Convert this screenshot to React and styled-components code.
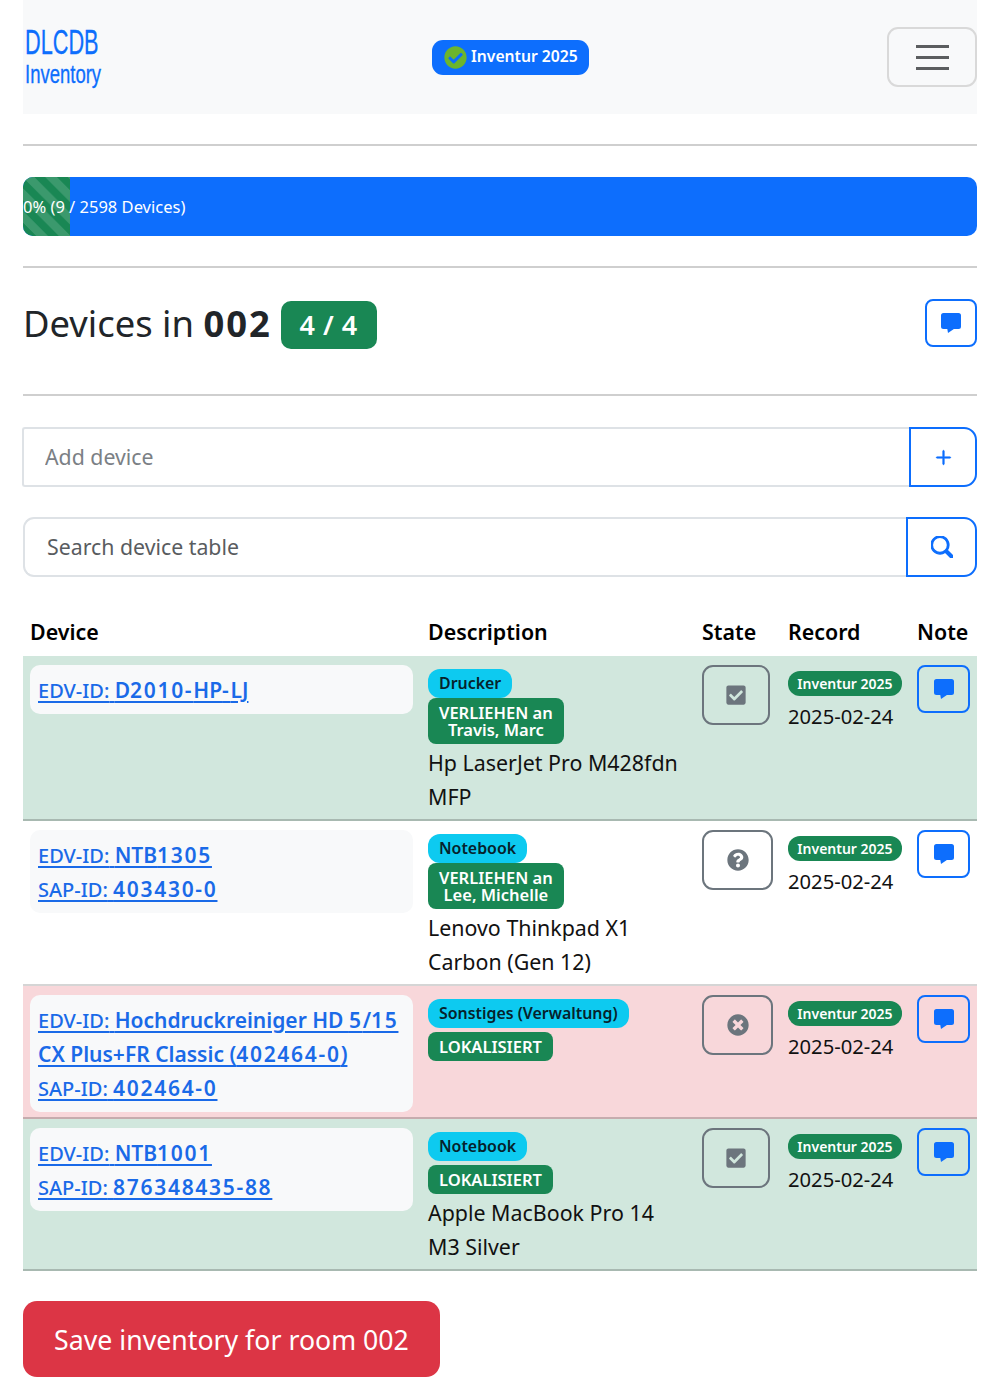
// App.jsx
import React from 'react';
import styled, { createGlobalStyle } from 'styled-components';
import { FaCheckCircle, FaCheckSquare, FaQuestionCircle, FaTimesCircle } from 'react-icons/fa';
import { BsPlusLg, BsSearch } from 'react-icons/bs';

const GlobalStyle = createGlobalStyle`
  html, body {
    margin: 0;
    padding: 0;
    background: #fff;
  }
  body {
    font-family: "Noto Sans", "Open Sans", sans-serif;
    font-size: 21.4px;
    line-height: 34px;
    color: #212529;
  }
`;

const Page = styled.div`
  padding: 0 23px 22px;
`;

const Navbar = styled.nav`
  height: 114px;
  background: #f8f9fa;
  display: grid;
  grid-template-columns: 409px 1fr 90px;
  align-items: center;
`;

const Brand = styled.div`
  padding: 0 0 3px 2px;
  color: #0d6efd;
  font-family: "Liberation Sans", sans-serif;
  -webkit-text-stroke: 0.3px #0d6efd;
`;

const BrandTitle = styled.div`
  font-size: 35px;
  line-height: 36px;
  transform: scaleX(0.62);
  transform-origin: left center;
`;

const BrandSub = styled.div`
  font-size: 25px;
  line-height: 28px;
  transform: scaleX(0.74);
  transform-origin: left center;
`;

const RoundBadge = styled.div`
  justify-self: start;
  box-sizing: border-box;
  display: flex;
  align-items: center;
  gap: 4px;
  height: 35px;
  padding: 0 11px 2px 12px;
  background: #0d6efd;
  border-radius: 11px;
  color: #fff;
  font-size: 15.7px;
  font-weight: 600;
  svg { color: #6cb52d; margin-top: 2px; }
`;

const Toggler = styled.button`
  width: 90px;
  height: 60px;
  background: transparent;
  border: 2px solid #d9d9d9;
  border-radius: 11px;
  display: flex;
  flex-direction: column;
  align-items: center;
  justify-content: center;
  gap: 8px;
  padding: 0;
`;

const TogglerBar = styled.span`
  width: 33px;
  height: 3px;
  background: #5b5d5f;
`;

const Rule = styled.hr`
  border: 0;
  height: 2px;
  background: #cfcfcf;
  margin: ${({ $top }) => $top}px 0 ${({ $bottom }) => $bottom}px;
`;

const Progress = styled.div`
  height: 59px;
  background: #0d6efd;
  border-radius: 10px;
  overflow: hidden;
  display: flex;
`;

const ProgressBar = styled.div`
  background-color: #198754;
  background-image: linear-gradient(
    45deg,
    rgba(255, 255, 255, 0.15) 25%,
    transparent 25%,
    transparent 50%,
    rgba(255, 255, 255, 0.15) 50%,
    rgba(255, 255, 255, 0.15) 75%,
    transparent 75%,
    transparent
  );
  background-size: 22.6px 22.6px;
  display: flex;
  align-items: center;
  color: #fff;
  font-size: 16.5px;
  white-space: nowrap;
`;

const TitleRow = styled.div`
  display: flex;
  justify-content: space-between;
  align-items: flex-start;
  height: 95px;
`;

const Title = styled.h2`
  margin: 0;
  display: flex;
  align-items: center;
  gap: 9px;
  height: 50px;
  font-size: 36.4px;
  font-weight: 400;
  line-height: 48px;
  span:first-child { margin-bottom: 3px; }
  b {
    font-weight: 700;
    letter-spacing: 2px;
  }
`;

const CountBadge = styled.span`
  display: inline-flex;
  align-items: center;
  justify-content: center;
  width: 96px;
  height: 48px;
  margin-top: 2px;
  background: #198754;
  color: #fff;
  border-radius: 10px;
  font-size: 27px;
  font-weight: 600;
  letter-spacing: 1px;
  word-spacing: -1px;
`;

const NoteButton = styled.button`
  width: ${({ $wide }) => ($wide ? 53 : 52)}px;
  height: 48px;
  flex: none;
  padding: 0;
  background: ${({ $wide }) => ($wide ? 'transparent' : '#fff')};
  border: 2px solid #0d6efd;
  border-radius: 8px;
  color: #0d6efd;
  display: flex;
  align-items: center;
  justify-content: center;
`;

const InputGroup = styled.div`
  display: flex;
  height: 60px;
  margin-bottom: ${({ $gap }) => $gap}px;
  margin-left: ${({ $shift }) => $shift || 0}px;
`;

const TextInput = styled.input`
  flex: 1;
  min-width: 0;
  box-sizing: border-box;
  height: 60px;
  border: 2px solid #dee2e6;
  border-right: 0;
  border-radius: ${({ $round }) => ($round ? '11px 0 0 11px' : '3px 0 0 3px')};
  padding: 0 0 2px ${({ $round }) => ($round ? 22 : 21)}px;
  font-family: inherit;
  font-size: 21.3px;
  color: #212529;
  outline: none;
  &::placeholder {
    color: ${({ $round }) => ($round ? '#595c5f' : '#7b8085')};
    opacity: 1;
  }
`;

const AddonButton = styled.button`
  box-sizing: border-box;
  width: ${({ $width }) => $width}px;
  height: 60px;
  flex: none;
  padding: 0;
  background: #fff;
  border: 2px solid #0d6efd;
  border-radius: 0 13px 13px 0;
  color: #0d6efd;
  display: flex;
  align-items: center;
  justify-content: center;
`;

const Table = styled.table`
  width: 954px;
  table-layout: fixed;
  border-collapse: collapse;
  margin-top: 38px;
`;

const HeadCell = styled.th`
  width: ${({ $width }) => $width}px;
  box-sizing: border-box;
  padding: 0 7px 7px;
  text-align: left;
  font-weight: 600;
  color: #000;
  height: 41px;
  vertical-align: bottom;
`;

const rowColors = {
  success: { bg: '#d1e7dd', line: '#a8b9b1' },
  danger: { bg: '#f8d7da', line: '#c6acae' },
  plain: { bg: '#fff', line: '#d5d5d5' },
};

const Row = styled.tr`
  background: ${({ $tone }) => rowColors[$tone].bg};
  border-bottom: 2px solid ${({ $tone }) => rowColors[$tone].line};
`;

const Cell = styled.td`
  padding: 8px 7px 5px;
  vertical-align: top;
  color: #111;
`;

const DeviceBox = styled.div`
  margin: 1px 1px 0 0;
  padding: 8px 7px 7px 8px;
  background: #f8f9fa;
  border-radius: 10px;
`;

const DeviceLink = styled.a`
  display: block;
  color: #1a6ae8;
  font-size: 21px;
  font-weight: 600;
  text-decoration: underline;
  text-underline-offset: 3px;
  text-decoration-thickness: 1.5px;
  small {
    font-size: 20px;
    font-weight: 500;
    line-height: 1;
  }
`;

const Digits = styled.span`
  letter-spacing: 1.7px;
`;

const Chip = styled.span`
  display: inline-block;
  padding: 6px 11px;
  font-size: ${({ $kind }) => ($kind === 'info' ? 15.9 : 16.5)}px;
  font-weight: 600;
  line-height: 17px;
  text-align: center;
  vertical-align: baseline;
  border-radius: ${({ $pill }) => ($pill ? '12px' : '8px')};
  background: ${({ $kind }) => ($kind === 'info' ? '#0dcaf0' : '#198754')};
  color: ${({ $kind }) => ($kind === 'info' ? '#06222b' : '#fff')};
`;

const ChipList = styled.div`
  margin-bottom: 1px;
`;

const StateButton = styled.button`
  box-sizing: border-box;
  width: ${({ $width }) => $width}px;
  height: 60px;
  margin-top: 1px;
  padding: 0;
  background: transparent;
  border: 2px solid #6c757d;
  border-radius: 11px;
  color: #6c757d;
  display: flex;
  align-items: center;
  justify-content: center;
`;

const RecordChip = styled.span`
  display: inline-block;
  box-sizing: border-box;
  width: 114px;
  height: 25px;
  margin-top: 7px;
  border-radius: 12px;
  background: #198754;
  color: #fff;
  font-size: 14px;
  font-weight: 600;
  line-height: 25px;
  text-align: center;
`;

const RecordDate = styled.div`
  margin-top: 1px;
  font-size: 20.2px;
  line-height: 34px;
`;

const NoteCellButton = styled(NoteButton)`
  margin-top: 1px;
`;

const SaveButton = styled.button`
  display: block;
  width: 417px;
  height: 76px;
  margin-top: 30px;
  padding: 0;
  border: 0;
  border-radius: 14px;
  background: #dc3545;
  color: #fff;
  font-family: inherit;
  font-size: 26.7px;
`;

const ChatIcon = () => (
  <svg width="20" height="20" viewBox="0 0 20 20" fill="currentColor" aria-hidden="true">
    <path d="M2.5 0h15A2.5 2.5 0 0 1 20 2.5v11a2.5 2.5 0 0 1-2.5 2.5h-4.6L7 20l-.7-4H2.500A2.500 2.500 0 0 1 0 13.500v-11A2.500 2.500 0 0 1 2.500 0z" />
  </svg>
);

const stateIcons = {
  done: <FaCheckSquare size={22} />,
  unknown: <FaQuestionCircle size={22} />,
  missing: <FaTimesCircle size={22} />,
};

const devices = [
  {
    tone: 'success',
    state: 'done',
    stateWidth: 68,
    links: [['EDV-ID:', 'D2010-HP-LJ']],
    chips: [
      { kind: 'info', pill: true, lines: ['Drucker'] },
      { kind: 'success', lines: ['VERLIEHEN an', 'Travis, Marc'] },
    ],
    text: 'Hp LaserJet Pro M428fdn MFP',
  },
  {
    tone: 'plain',
    state: 'unknown',
    stateWidth: 71,
    links: [['EDV-ID:', 'NTB1305'], ['SAP-ID:', '403430-0']],
    chips: [
      { kind: 'info', pill: true, lines: ['Notebook'] },
      { kind: 'success', lines: ['VERLIEHEN an', 'Lee, Michelle'] },
    ],
    text: 'Lenovo Thinkpad X1 Carbon (Gen 12)',
  },
  {
    tone: 'danger',
    state: 'missing',
    stateWidth: 71,
    links: [['EDV-ID:', 'Hochdruckreiniger HD 5/15 CX Plus+FR Classic (402464-0)'], ['SAP-ID:', '402464-0']],
    chips: [
      { kind: 'info', pill: true, lines: ['Sonstiges (Verwaltung)'] },
      { kind: 'success', lines: ['LOKALISIERT'] },
    ],
    text: '',
  },
  {
    tone: 'success',
    state: 'done',
    stateWidth: 68,
    links: [['EDV-ID:', 'NTB1001'], ['SAP-ID:', '876348435-88']],
    chips: [
      { kind: 'info', pill: true, lines: ['Notebook'] },
      { kind: 'success', lines: ['LOKALISIERT'] },
    ],
    text: 'Apple MacBook Pro 14 M3 Silver',
  },
];

// the numbers in the ids run wider than the letters around them
const spaceDigits = (value) =>
  value.split(/([0-9-]+)/).map((part, i) => (i % 2 ? <Digits key={i}>{part}</Digits> : part));

const App = () => {
  return (
    <Page>
      <GlobalStyle />
      <Navbar>
        <Brand>
          <BrandTitle>DLCDB</BrandTitle>
          <BrandSub>Inventory</BrandSub>
        </Brand>
        <RoundBadge>
          <FaCheckCircle size={23} />
          Inventur 2025
        </RoundBadge>
        <Toggler aria-label="Menu">
          <TogglerBar />
          <TogglerBar />
          <TogglerBar />
        </Toggler>
      </Navbar>

      <Rule $top={30} $bottom={31} />

      <Progress>
        <ProgressBar style={{ width: `${(47 / 954) * 100}%` }}>0% (9 / 2598 Devices)</ProgressBar>
      </Progress>

      <Rule $top={30} $bottom={31} />

      <TitleRow>
        <Title>
          <span>Devices in <b>002</b></span>
          <CountBadge>4 / 4</CountBadge>
        </Title>
        <NoteButton aria-label="Room note"><ChatIcon /></NoteButton>
      </TitleRow>

      <Rule $top={0} $bottom={31} />

      <InputGroup $gap={30} $shift={-1}>
        <TextInput placeholder="Add device" />
        <AddonButton $width={68} aria-label="Add"><BsPlusLg size={19} strokeWidth={0.8} /></AddonButton>
      </InputGroup>

      <InputGroup $gap={0}>
        <TextInput $round placeholder="Search device table" />
        <AddonButton $width={71} aria-label="Search"><BsSearch size={22} strokeWidth={1} /></AddonButton>
      </InputGroup>

      <Table>
        <thead>
          <tr>
            <HeadCell $width={398}>Device</HeadCell>
            <HeadCell $width={274}>Description</HeadCell>
            <HeadCell $width={86}>State</HeadCell>
            <HeadCell $width={129}>Record</HeadCell>
            <HeadCell $width={67}>Note</HeadCell>
          </tr>
        </thead>
        <tbody>
          {devices.map((device) => (
            <Row key={device.links[0][1]} $tone={device.tone}>
              <Cell>
                <DeviceBox>
                  {device.links.map(([label, value]) => (
                    <DeviceLink key={label} href="#">
                      <small>{label} </small>{spaceDigits(value)}
                    </DeviceLink>
                  ))}
                </DeviceBox>
              </Cell>
              <Cell>
                <ChipList>
                  {device.chips.map((chip) => (
                    <div key={chip.lines[0]}>
                      <Chip $kind={chip.kind} $pill={chip.pill}>
                        {chip.lines.map((line, i) => (
                          <React.Fragment key={line}>
                            {i > 0 && <br />}
                            {line}
                          </React.Fragment>
                        ))}
                      </Chip>
                    </div>
                  ))}
                </ChipList>
                {device.text}
              </Cell>
              <Cell>
                <StateButton $width={device.stateWidth} aria-label={device.state}>
                  {stateIcons[device.state]}
                </StateButton>
              </Cell>
              <Cell>
                <RecordChip>Inventur 2025</RecordChip>
                <RecordDate>2025-02-24</RecordDate>
              </Cell>
              <Cell>
                <NoteCellButton $wide aria-label="Device note"><ChatIcon /></NoteCellButton>
              </Cell>
            </Row>
          ))}
        </tbody>
      </Table>

      <SaveButton>Save inventory for room 002</SaveButton>
    </Page>
  );
};

export default App;
